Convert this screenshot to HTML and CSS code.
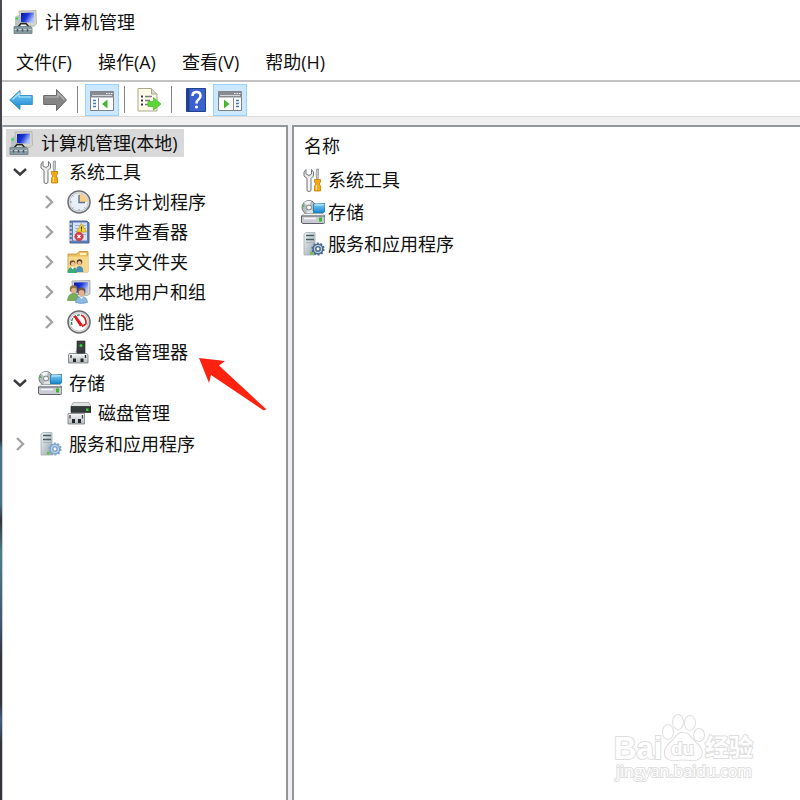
FILE: index.html
```html
<!DOCTYPE html>
<html lang="zh-CN">
<head>
  <meta charset="UTF-8">
  <meta name="viewport" content="width=device-width, initial-scale=1.0">
  <title>计算机管理</title>
  <link rel="stylesheet" href="styles.css">
</head>
<body>
  <!-- shared icons -->
  <svg class="defs" width="0" height="0" aria-hidden="true">
    <defs>
      <linearGradient id="screen" x1="0" y1="0" x2="1" y2="0.5">
        <stop offset="0" stop-color="#0a1a9c"/>
        <stop offset="0.5" stop-color="#1a34d8"/>
        <stop offset="1" stop-color="#b4c4fa"/>
      </linearGradient>
      <linearGradient id="blue" x1="0" y1="0" x2="0" y2="1">
        <stop offset="0" stop-color="#7fd0f8"/>
        <stop offset="1" stop-color="#1583cf"/>
      </linearGradient>
      <linearGradient id="steel" x1="0" y1="0" x2="0" y2="1">
        <stop offset="0" stop-color="#f8f8f8"/>
        <stop offset="1" stop-color="#b4b8bc"/>
      </linearGradient>
      <linearGradient id="tower" x1="0" y1="0" x2="1" y2="1">
        <stop offset="0" stop-color="#f0f5f6"/>
        <stop offset="1" stop-color="#96a5ab"/>
      </linearGradient>

      <symbol id="computer" viewBox="0 0 24 24">
        <path d="M6 1 23 0.5 23.500 14 21 16.500 7 14z" fill="#d6d5cc" stroke="#a9a9a0" stroke-width="0.7"/>
        <path d="M8 3 21 2.500 21 13 8 12z" fill="url(#screen)"/>
        <path d="M2 7 5 5 8 7V17H2z" fill="#b9c1c2"/>
        <path d="M2.500 7.500H5V9.500H2.500z" fill="#37d83b"/>
        <path d="M5 17 8 13.500H13L16 17" fill="none" stroke="#252525" stroke-width="1.400"/>
        <path d="M1 16.500H18L19 18V23.500H1z" fill="#869aa1" stroke="#6b7c83" stroke-width="0.8"/>
        <path d="M1.500 19.500H18.500" stroke="#c5d2d6"/>
        <path d="M4.500 19V21.500M9.500 19V21.500M14.500 19V21.500" stroke="#465358" stroke-width="1.500"/>
      </symbol>

      <symbol id="tools" viewBox="0 0 24 24">
        <path d="M5 1.500 3 4V8L6 10.500V22Q6 23.500 8 23.500T10 22V10.500L12.500 8V4L10.500 1.500V6L8 7.500 5 6z" fill="#e7e7e7" stroke="#77797b"/>
        <path d="M8 10V22" stroke="#fff" stroke-width="1.200"/>
        <path d="M15.500 1H17.500V7L17 12H16L15 7z" fill="#c8cbce" stroke="#777b80" stroke-width="0.6"/>
        <path d="M13.500 11.500H19.500V14L18 16 19.500 18V23H13.500V18L15 16 13.500 14z" fill="#f4a911" stroke="#c57a00" stroke-width="0.8"/>
        <path d="M15.500 17V22" stroke="#ffe08a" stroke-width="1.200"/>
      </symbol>

      <symbol id="clock" viewBox="0 0 24 24">
        <circle cx="12" cy="12" r="11" fill="#f7f8fa" stroke="#71747a" stroke-width="1.600"/>
        <circle cx="12" cy="12" r="9.200" fill="#e9eff6" stroke="#c0c2c5"/>
        <path d="M12 12V3.500A8.500 8.500 0 0 1 20.500 12z" fill="#f9cf86"/>
        <path d="M12 5V12.500H18" fill="none" stroke="#5b7495" stroke-width="1.400"/>
        <path d="M12 19V21M3 12H5M5.500 5.500 6.500 6.500M5.500 18.500 6.500 17.500M18.500 18.500 17.500 17.500" stroke="#8c97a5"/>
      </symbol>

      <symbol id="events" viewBox="0 0 24 24">
        <path d="M3 1H20L22 3V23H3z" fill="#5f7db3" stroke="#4a659b"/>
        <path d="M6 2.500H20V20.500H6z" fill="#d3e2f6"/>
        <path d="M8 5.500H19M8 8.500H19M8 11.500H19M8 14.500H19" stroke="#9cb4dc"/>
        <path d="M1.500 4H5M1.500 8H5M1.500 12H5M1.500 16H5M1.500 20H5" stroke="#ced3db" stroke-width="1.600"/>
        <path d="M14.500 3.500 19.500 12H9.500z" fill="#f8d837" stroke="#c9a21e" stroke-width="0.8"/>
        <path d="M14.500 6.500V9.500M14.500 10.300V11.300" stroke="#443c10" stroke-width="1.200"/>
        <circle cx="12" cy="16.500" r="4.200" fill="#dd4046" stroke="#b63036" stroke-width="0.6"/>
        <path d="M10.500 15 13.500 18M13.500 15 10.500 18" stroke="#fff" stroke-width="1.300"/>
      </symbol>

      <symbol id="share" viewBox="0 0 24 24">
        <path d="M1 4H10L12 1.500H21V22H1z" fill="#e9be5c" stroke="#c1913a" stroke-width="0.8"/>
        <path d="M13 3H19V5H13z" fill="#fff3c5"/>
        <path d="M1.500 6.500H21V22H1.500z" fill="#f6d98c"/>
        <circle cx="5.500" cy="13" r="2.800" fill="#7a5433"/>
        <circle cx="6" cy="14" r="2" fill="#f2c69d"/>
        <circle cx="12.500" cy="12" r="2.800" fill="#543c2a"/>
        <circle cx="12.500" cy="13" r="2" fill="#edbd94"/>
        <path d="M0.500 23Q0.500 17 5.500 17T10 23z" fill="#3ea878"/>
        <path d="M9 22Q9 16 12.500 16T16.500 22z" fill="#4c8fbd"/>
        <path d="M4 17 5.500 19.500 7.500 17" fill="#fff"/>
      </symbol>

      <symbol id="users" viewBox="0 0 24 24">
        <path d="M5 1 23 0.5V14L20 15.500 6 14z" fill="#d3d5d4" stroke="#9c9f9e" stroke-width="0.8"/>
        <path d="M7 2.500 21 2.300V13L7 12.500z" fill="url(#screen)"/>
        <circle cx="6.500" cy="9" r="3.800" fill="#8d7448"/>
        <circle cx="7" cy="10.500" r="2.700" fill="#e5b083"/>
        <path d="M0.500 20.500Q1 13.500 6.500 13.500T12 20.500z" fill="#7aad58" stroke="#5c9140" stroke-width="0.6"/>
        <circle cx="14.500" cy="11.500" r="4" fill="#6c5747"/>
        <circle cx="14.500" cy="13" r="3" fill="#e0b292"/>
        <path d="M8.500 22.500Q9 16.500 14.500 16.500T20.500 22.500Q14 24.500 8.500 22.500z" fill="#8cb9e2" stroke="#5b8ab9" stroke-width="0.6"/>
        <path d="M12.500 16.700 14.500 19 16.500 16.700z" fill="#fff"/>
      </symbol>

      <symbol id="gauge" viewBox="0 0 24 24">
        <circle cx="12" cy="12" r="11" fill="#fff" stroke="#6d6f71" stroke-width="1.600"/>
        <circle cx="12" cy="12" r="9.300" fill="#fdfdfd" stroke="#b9bcbd"/>
        <path d="M5 15A7.500 7.500 0 0 1 13 5" fill="none" stroke="#2c7c64" stroke-width="1.300" stroke-dasharray="3 1"/>
        <path d="M14 5Q19.500 7 19 14L15 16.500" fill="none" stroke="#df1a1a" stroke-width="1.600"/>
        <path d="M6.500 6.500 9 5.500 16 15 13 16.500z" fill="#e8151b"/>
      </symbol>

      <symbol id="device" viewBox="0 0 24 24">
        <path d="M10 1H18V14H10z" fill="#3d4142" stroke="#222" stroke-width="0.6"/>
        <path d="M8.500 12 10 7V14z" fill="#888"/>
        <circle cx="14" cy="5.500" r="1.500" fill="#32d52e"/>
        <path d="M2 13.500H20L21 15V23H1.500V15z" fill="url(#steel)" stroke="#77797a" stroke-width="0.8"/>
        <path d="M10 10H18V13.500H10z" fill="#34383a"/>
        <path d="M4 15V18M18.500 15V18" stroke="#333" stroke-width="1.400"/>
        <path d="M6 18.500H9V22H6zM13.500 18.500H16.500V22H13.500z" fill="#252829"/>
      </symbol>

      <symbol id="storage" viewBox="0 0 24 24">
        <circle cx="8" cy="7.500" r="7" fill="#b7bcbe" stroke="#747b7e"/>
        <path d="M8 7.500 3 2.500Q6 0 10 1z" fill="#edf1f1"/>
        <path d="M8 7.500 13 12.500Q9 15 5 14z" fill="#e0e4e5"/>
        <circle cx="8" cy="7.500" r="2.500" fill="#f4f4f4" stroke="#7b8285"/>
        <circle cx="2.500" cy="6" r="1" fill="#43b947"/>
        <path d="M12.500 4 24 3.500V11.500L22 13H12.500z" fill="url(#blue)" stroke="#177199" stroke-width="0.7"/>
        <path d="M13.500 5 22.500 4.800" stroke="#cff3fd"/>
        <path d="M3 13.500H22L24 16H0.500z" fill="#f4f4f6" stroke="#84878b" stroke-width="0.6"/>
        <path d="M0.500 16H24V22.500L22.500 23.500H2L0.500 22.500z" fill="#c9cad2" stroke="#5d6067"/>
        <path d="M3 18.500H15" stroke="#f7f7fa" stroke-width="1.500"/>
        <path d="M18 17.500H21V21.500H18z" fill="#37bd2c"/>
      </symbol>

      <symbol id="disk" viewBox="0 0 24 24">
        <path d="M6 1.500H22L24 5.500H4z" fill="#dfe1e1" stroke="#999c9e" stroke-width="0.7"/>
        <path d="M4 5.500H24V11.500H4z" fill="#34393a" stroke="#1d2122" stroke-width="0.6"/>
        <path d="M19 7.500H21.500V10H19z" fill="#35d12e"/>
        <path d="M1 12.500H17.500V23H1z" fill="url(#steel)" stroke="#7a7d7f" stroke-width="0.8"/>
        <path d="M3 14V17.500M15.500 14V17.500" stroke="#444" stroke-width="1.300"/>
        <path d="M5 18H8V22H5zM11 18H14V22H11z" fill="#25292b"/>
      </symbol>

      <symbol id="services" viewBox="0 0 24 24">
        <path d="M3 2 5 0.5H14V23H3z" fill="url(#tower)" stroke="#a3b1b7" stroke-width="0.8"/>
        <path d="M5 3.500H13M5 7.500H13" stroke="#4a5d64" stroke-width="1.500"/>
        <path d="M5 10.500H13" stroke="#a9b7bc"/>
        <circle cx="17" cy="17" r="5.600" fill="currentColor" stroke="currentColor" stroke-width="2" stroke-dasharray="2 1.500"/>
        <circle cx="17" cy="17" r="4" fill="#c3d8ea"/>
        <circle cx="17" cy="17" r="2.200" fill="#fff" stroke="currentColor" stroke-width="1.500"/>
        <path d="M9 20H11.500V22.500H9z" fill="#60c33b"/>
      </symbol>

      <symbol id="open" viewBox="0 0 16 16">
        <path d="M2 5 8 10.500 14 5" fill="none" stroke="#3b3b3b" stroke-width="2.400"/>
      </symbol>
      <symbol id="closed" viewBox="0 0 16 16">
        <path d="M5 2 11 8 5 14" fill="none" stroke="#a3a3a3" stroke-width="2.400"/>
      </symbol>
    </defs>
  </svg>

  <div class="desktop-edge"></div>

  <div class="window">
    <header class="titlebar">
      <svg class="icon"><use href="#computer"/></svg>
      <h1>计算机管理</h1>
    </header>

    <nav class="menubar">
      <button type="button">文件(F)</button>
      <button type="button">操作(A)</button>
      <button type="button">查看(V)</button>
      <button type="button">帮助(H)</button>
    </nav>

    <div class="toolbar">
      <button type="button" aria-label="后退">
        <svg class="icon" viewBox="0 0 24 24">
          <path d="M0.700 12 11 2.500V7.500H23.300V16.500H11V21.500z" fill="url(#blue)" stroke="#3a93c9"/>
          <path d="M3.500 11.500 10 5.500V9H22" fill="none" stroke="#a9e5fc" stroke-width="1.200"/>
        </svg>
      </button>
      <button type="button" aria-label="前进">
        <svg class="icon" viewBox="0 0 24 24">
          <path d="M23.500 12 13.500 1.500V7.500H0.700V16.500H13.500V22.500z" fill="#858585" stroke="#6a6a6a"/>
          <path d="M2 9H15V5L21.500 12" fill="none" stroke="#b7b7b7" stroke-width="1.200"/>
        </svg>
      </button>
      <span class="separator"></span>
      <button type="button" class="active" aria-label="显示/隐藏控制台树">
        <svg class="icon" viewBox="0 0 24 24">
          <path d="M0.500 3.500H23.500V22.500H0.500z" fill="#fff" stroke="#7b8085"/>
          <path d="M0.500 3.500H23.500V9.500H0.500z" fill="#878c92"/>
          <path d="M2 7.500H22" stroke="#d6dade"/>
          <path d="M16 5.500H17.500M18.500 5.500H20M21 5.500H22.500" stroke="#f3f3f3"/>
          <path d="M8.500 10V22" stroke="#878c92"/>
          <path d="M3 12.500H6M3 15.500H6M3 18.500H6" stroke="#407cbd" stroke-width="1.500"/>
          <path d="M17.500 11.500V20.500L12 16z" fill="#42b82d"/>
        </svg>
      </button>
      <span class="separator"></span>
      <button type="button" aria-label="导出列表">
        <svg class="icon" viewBox="0 0 24 24">
          <path d="M1 0.500H14.500L20 6V23H1z" fill="#fffce8" stroke="#aaa78e"/>
          <path d="M14.500 0.500V6H20" fill="#dbd9cb" stroke="#aaa78e"/>
          <path d="M4 8.500H6M4 12.500H6M4 16.500H6" stroke="#34345e" stroke-width="1.800"/>
          <path d="M8 8.500H15M8 12.500H13M8 16.500H13" stroke="#7a7a87" stroke-width="1.300"/>
          <path d="M11 13.500H16.500V9.500L24 16 16.500 22V18.500H11z" fill="#5dd738" stroke="#4cba35" stroke-width="0.8"/>
        </svg>
      </button>
      <span class="separator"></span>
      <button type="button" aria-label="帮助">
        <svg class="icon" viewBox="0 0 24 24">
          <path d="M2.500 0.500H21.500V23.500H2.500z" fill="#3b62cc" stroke="#24418f"/>
          <path d="M3 1H5.500V23H3z" fill="#203e94"/>
          <path d="M8.500 8Q8.500 4 12.500 4T16.500 8Q16.500 10 14.500 11.500T12.500 15.500" fill="none" stroke="#fff" stroke-width="2.500"/>
          <circle cx="12.500" cy="19" r="1.600" fill="#fff"/>
        </svg>
      </button>
      <button type="button" class="active" aria-label="显示/隐藏操作窗格">
        <svg class="icon" viewBox="0 0 24 24">
          <path d="M0.500 3.500H23.500V22.500H0.500z" fill="#fff" stroke="#7b8085"/>
          <path d="M0.500 3.500H23.500V9.500H0.500z" fill="#878c92"/>
          <path d="M2 7.500H22" stroke="#d6dade"/>
          <path d="M16 5.500H17.500M18.500 5.500H20M21 5.500H22.500" stroke="#f3f3f3"/>
          <path d="M15.500 10V22" stroke="#878c92"/>
          <path d="M18 12.500H21M18 15.500H21M18 18.500H21" stroke="#407cbd" stroke-width="1.500"/>
          <path d="M6 11.500V20.500L11.500 16z" fill="#42b82d"/>
        </svg>
      </button>
    </div>

    <main class="panes">
      <section class="tree-pane">
        <div class="root"><svg class="icon"><use href="#computer"/></svg><span>计算机管理(本地)</span></div>
        <ul class="tree">
          <li>
            <div class="row">
              <button type="button" class="toggle" aria-label="折叠系统工具"><svg><use href="#open"/></svg></button>
              <svg class="icon"><use href="#tools"/></svg><span>系统工具</span>
            </div>
            <ul>
              <li class="row">
                <button type="button" class="toggle" aria-label="展开任务计划程序"><svg><use href="#closed"/></svg></button>
                <svg class="icon"><use href="#clock"/></svg><span>任务计划程序</span>
              </li>
              <li class="row">
                <button type="button" class="toggle" aria-label="展开事件查看器"><svg><use href="#closed"/></svg></button>
                <svg class="icon"><use href="#events"/></svg><span>事件查看器</span>
              </li>
              <li class="row">
                <button type="button" class="toggle" aria-label="展开共享文件夹"><svg><use href="#closed"/></svg></button>
                <svg class="icon"><use href="#share"/></svg><span>共享文件夹</span>
              </li>
              <li class="row">
                <button type="button" class="toggle" aria-label="展开本地用户和组"><svg><use href="#closed"/></svg></button>
                <svg class="icon"><use href="#users"/></svg><span>本地用户和组</span>
              </li>
              <li class="row">
                <button type="button" class="toggle" aria-label="展开性能"><svg><use href="#closed"/></svg></button>
                <svg class="icon"><use href="#gauge"/></svg><span>性能</span>
              </li>
              <li class="row leaf">
                <svg class="icon"><use href="#device"/></svg>
                <span class="pointed">设备管理器
                  <svg class="arrow" viewBox="0 0 68 54" aria-hidden="true">
                    <path d="M0 0 26 3 20 7.500 67 51Q66 53 64 52L12 17 10 25z" fill="#fe2211"/>
                  </svg>
                </span>
              </li>
            </ul>
          </li>
          <li>
            <div class="row">
              <button type="button" class="toggle" aria-label="折叠存储"><svg><use href="#open"/></svg></button>
              <svg class="icon"><use href="#storage"/></svg><span>存储</span>
            </div>
            <ul>
              <li class="row leaf"><svg class="icon"><use href="#disk"/></svg><span>磁盘管理</span></li>
            </ul>
          </li>
          <li class="row">
            <button type="button" class="toggle" aria-label="展开服务和应用程序"><svg><use href="#closed"/></svg></button>
            <svg class="icon gear-light"><use href="#services"/></svg><span>服务和应用程序</span>
          </li>
        </ul>
      </section>

      <section class="list-pane">
        <table>
          <thead>
            <tr><th>名称</th></tr>
          </thead>
          <tbody>
            <tr><td><div class="item"><svg class="icon"><use href="#tools"/></svg>系统工具</div></td></tr>
            <tr><td><div class="item"><svg class="icon"><use href="#storage"/></svg>存储</div></td></tr>
            <tr><td><div class="item"><svg class="icon gear-dark"><use href="#services"/></svg>服务和应用程序</div></td></tr>
          </tbody>
        </table>
      </section>
    </main>
  </div>

  <div class="watermark">
    <svg viewBox="0 0 146 74">
      <g class="outline">
        <ellipse cx="54" cy="20" rx="5" ry="7"/>
        <ellipse cx="64" cy="10" rx="5" ry="7"/>
        <ellipse cx="76" cy="11" rx="5" ry="7"/>
        <ellipse cx="85" cy="23" rx="5" ry="6"/>
        <path d="M69 21Q74 21 78 27L85 34Q90 40 86 46 82 49 76 48 69 47 62 48 56 49 52 45 49 39 54 33L61 26Q64 21 69 21z"/>
        <text x="0" y="47" class="logo">Bai</text>
        <text x="57" y="43" class="du">du</text>
        <text x="91" y="44" class="cjk">经验</text>
        <text x="2" y="65" class="site">jingyan.baidu.com</text>
      </g>
    </svg>
  </div>
</body>
</html>
```
FILE: styles.css
```css
* {
    box-sizing: border-box;
}

body {
    margin: 0;
    display: flex;
    min-height: 100vh;
    background-color: #fff;
    color: #111;
    font-family: "Open Sans", "Noto Sans CJK SC", sans-serif;
    font-size: 18px;
    line-height: 30px;
    overflow: hidden;
}

.defs {
    position: absolute;
}

button {
    border: 0;
    padding: 0;
    background: none;
    color: inherit;
    font: inherit;
}

ul {
    list-style: none;
    margin: 0;
    padding: 0;
}

.icon {
    width: 24px;
    height: 24px;
    flex: none;
}

.desktop-edge {
    width: 2px;
    background: linear-gradient(#4a4a50 0, #34343b 55%, #487288 56%, #487288 63%, #34343b 65%, #4c7f88 69%, #3e5575 78%, #34343b 82%, #34343b 88%, #435f87 90%, #34343b 93%);
}

.window {
    flex: 1;
    display: flex;
    flex-direction: column;
    background-color: #fff;
}

.titlebar {
    display: flex;
    align-items: center;
    gap: 8px;
    height: 44px;
    padding-left: 11px;
}

.titlebar h1 {
    margin: 0;
    font-size: 18px;
    font-weight: normal;
}

.menubar {
    display: flex;
    gap: 26px;
    height: 38px;
    padding-left: 14px;
    border-bottom: 2px solid #c3c3c5;
}

.toolbar {
    display: flex;
    align-items: center;
    height: 35px;
    padding: 1px 0 0 2px;
    border-bottom: 1px solid #dcdcdc;
}

.toolbar button {
    display: flex;
    align-items: center;
    justify-content: center;
    width: 34px;
    height: 32px;
}

.toolbar .active {
    background-color: #cce8ff;
    border: 1px solid #99d1ff;
}

.separator {
    width: 1px;
    height: 27px;
    margin: 0 7px 0 5px;
    background-color: #858585;
}

.panes {
    flex: 1;
    display: flex;
    gap: 4px;
    padding-top: 8px;
    background-color: #f0f0f0;
}

.tree-pane,
.list-pane {
    background-color: #fff;
    border: 2px solid #93969b;
    border-bottom: 0;
}

.tree-pane {
    flex: 0 0 286px;
    padding: 2px 0 0 3px;
    border-left: 1px solid #c9ccd2;
}

.list-pane {
    flex: 1;
    border-right: 0;
    padding: 3px 0 0 7px;
}

.root {
    display: flex;
    width: fit-content;
    align-items: center;
    gap: 8px;
    height: 28px;
    padding: 0 6px 0 3px;
    background-color: #d9d9d9;
}

.row {
    display: flex;
    align-items: center;
    height: 30px;
}

.row .icon {
    margin-right: 7px;
}

.tree ul {
    padding: 0 0 1px 29px;
}

.toggle {
    display: flex;
    justify-content: center;
    width: 28px;
    margin-right: 4px;
}

.toggle svg {
    width: 16px;
    height: 16px;
}

.leaf {
    padding-left: 32px;
}

.pointed {
    position: relative;
}

.arrow {
    position: absolute;
    left: 101px;
    top: 21px;
    width: 68px;
    height: 54px;
}

.gear-light {
    color: #7fa6c8;
}

.gear-dark {
    color: #4d6c8e;
}

table {
    width: 100%;
    border-collapse: collapse;
}

th {
    height: 34px;
    padding: 0 0 2px 3px;
    font-weight: normal;
    text-align: left;
}

td {
    padding: 0;
}

.item {
    display: flex;
    align-items: center;
    gap: 3px;
    height: 32px;
}

.watermark {
    position: absolute;
    right: 40px;
    bottom: 14px;
    width: 146px;
    height: 74px;
}

.watermark svg {
    display: block;
    overflow: visible;
}

.outline {
    fill: #fff;
    stroke: #dedede;
    stroke-width: 2px;
    paint-order: stroke;
}

.logo {
    font-family: "Liberation Sans", sans-serif;
    font-size: 31px;
    font-weight: bold;
}

.du {
    font-family: "Liberation Sans", sans-serif;
    font-size: 19px;
    font-weight: bold;
}

.cjk {
    font-family: "Noto Sans CJK SC", sans-serif;
    font-size: 24px;
    font-weight: bold;
}

.site {
    font-family: "Open Sans", sans-serif;
    font-size: 16px;
}
```
